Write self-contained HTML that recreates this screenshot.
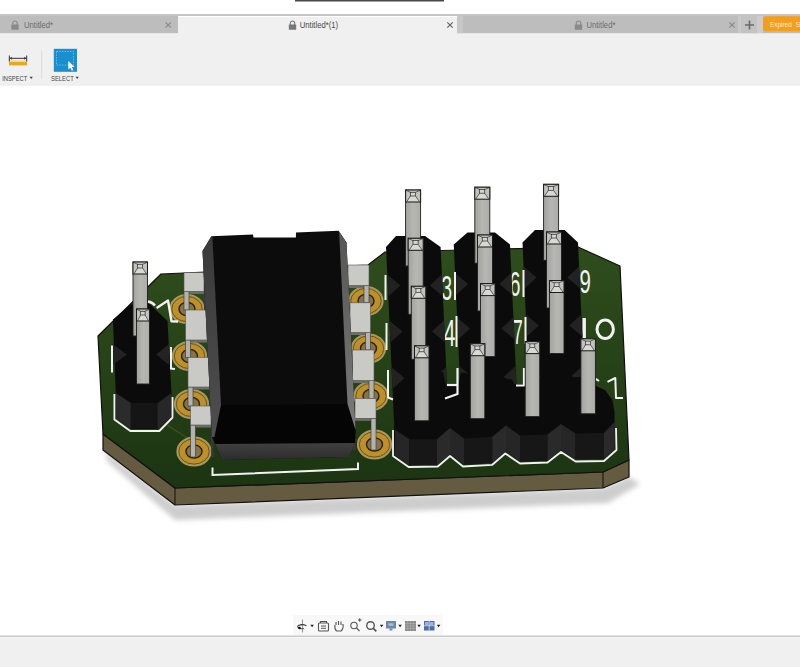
<!DOCTYPE html>
<html><head><meta charset="utf-8">
<style>
html,body{margin:0;padding:0;width:800px;height:667px;overflow:hidden;background:#fff;font-family:"Liberation Sans",sans-serif;}
svg{position:absolute;left:0;top:0;display:block}
</style></head>
<body>
<svg width="800" height="667" viewBox="0 0 800 667" font-family="Liberation Sans, sans-serif">
<defs>
  <linearGradient id="shadowG" x1="0" y1="0" x2="0" y2="1">
    <stop offset="0" stop-color="#c8c8c8"/>
    <stop offset="1" stop-color="#ffffff" stop-opacity="0"/>
  </linearGradient>
  <linearGradient id="pinG" x1="0" y1="0" x2="1" y2="0">
    <stop offset="0" stop-color="#a2a29e"/>
    <stop offset="0.5" stop-color="#b6b6b2"/>
    <stop offset="1" stop-color="#acaca8"/>
  </linearGradient>
  <linearGradient id="icSideL" x1="0" y1="0" x2="0" y2="1">
    <stop offset="0" stop-color="#3a3a3a"/>
    <stop offset="1" stop-color="#4e4e4e"/>
  </linearGradient>
  <linearGradient id="icSideR" x1="0" y1="0" x2="0" y2="1">
    <stop offset="0" stop-color="#555555"/>
    <stop offset="1" stop-color="#7a7a7a"/>
  </linearGradient>
  <linearGradient id="icFront" x1="0" y1="0" x2="0" y2="1">
    <stop offset="0" stop-color="#404040"/>
    <stop offset="1" stop-color="#2c2c2c"/>
  </linearGradient>
  <linearGradient id="hdrFront" x1="0" y1="0" x2="0" y2="1">
    <stop offset="0" stop-color="#3a3a3a"/>
    <stop offset="1" stop-color="#1e1e1e"/>
  </linearGradient>
  <linearGradient id="boardG" gradientUnits="userSpaceOnUse" x1="0" y1="250" x2="0" y2="488">
    <stop offset="0" stop-color="#2e4d1c"/>
    <stop offset="0.6" stop-color="#243f16"/>
    <stop offset="1" stop-color="#1c3412"/>
  </linearGradient>
  <filter id="blur6" x="-20%" y="-50%" width="140%" height="200%"><feGaussianBlur stdDeviation="2.5"/></filter>
</defs>


<rect x="0" y="0" width="800" height="14" fill="#ffffff"/>
<rect x="295" y="0" width="149" height="1.5" fill="#4a4a4a"/>
<rect x="0" y="14" width="800" height="19.5" fill="#bdbdbd"/>
<rect x="0" y="14" width="800" height="2" fill="#c6c6c6"/>
<rect x="178" y="16" width="279" height="18" fill="#f0f0f0"/>
<rect x="178" y="16" width="279" height="1" fill="#ffffff"/>
<rect x="457" y="16" width="6" height="17.5" fill="#c8c8c8"/>
<rect x="738" y="16" width="3" height="17.5" fill="#cacaca"/>
<rect x="741" y="16" width="16" height="17.5" fill="#c3c3c3"/>
<rect x="757" y="16" width="6" height="17.5" fill="#cdcdcd"/>
<rect x="763" y="16.2" width="45" height="15" rx="2.5" fill="#f49e1e"/>
<text x="770" y="27" font-size="7.4" fill="#fdeccc" textLength="21.7" lengthAdjust="spacingAndGlyphs">Expired</text>
<text x="795.5" y="27" font-size="7.4" fill="#fdeccc">S</text>
<rect x="0" y="33.5" width="800" height="51" fill="#f0f0f0"/>
<!-- tab icons/text -->
<g fill="none" stroke="#8a8a8a" stroke-width="1.1">
  <path d="M12.8,25 v-1.8 a2.2,2.2 0 0 1 4.4,0 v1.8"/>
  <path d="M290.3,25 v-1.8 a2.2,2.2 0 0 1 4.4,0 v1.8" stroke="#777"/>
  <path d="M576.3,25 v-1.8 a2.2,2.2 0 0 1 4.4,0 v1.8"/>
</g>
<rect x="11.3" y="24.6" width="7.4" height="5.2" rx="0.6" fill="#8a8a8a"/>
<rect x="288.8" y="24.6" width="7.4" height="5.2" rx="0.6" fill="#777"/>
<rect x="574.8" y="24.6" width="7.4" height="5.2" rx="0.6" fill="#8a8a8a"/>
<text x="24" y="28.4" font-size="8.5" fill="#6c6c6c" textLength="29" lengthAdjust="spacingAndGlyphs">Untitled*</text>
<text x="299.7" y="28.4" font-size="8.5" fill="#4a4a4a" textLength="38.5" lengthAdjust="spacingAndGlyphs">Untitled*(1)</text>
<text x="586.4" y="28.4" font-size="8.5" fill="#6c6c6c" textLength="29" lengthAdjust="spacingAndGlyphs">Untitled*</text>
<g stroke="#8a8a8a" stroke-width="1.2">
  <path d="M165.5,22.3 l5.4,5.4 M170.9,22.3 l-5.4,5.4"/>
  <path d="M447.3,22.3 l5.4,5.4 M452.7,22.3 l-5.4,5.4" stroke="#666"/>
  <path d="M729.3,22.3 l5.4,5.4 M734.7,22.3 l-5.4,5.4"/>
</g>
<path d="M745,25 h9 M749.5,20.5 v9" stroke="#6a6a6a" stroke-width="1.6"/>

<rect x="0" y="84.5" width="800" height="1" fill="#e6e6e6"/>
<!-- inspect icon -->
<rect x="9" y="60.8" width="18" height="4.6" fill="#e8a81c"/>
<rect x="9" y="60.8" width="18" height="1.2" fill="#f8d880"/>
<path d="M9.3,55.5 v6 M26.7,55.5 v6 M9.5,58.3 h17" stroke="#333" stroke-width="1"/>
<path d="M9.8,58.3 l2,-1.5 v3 z M26.2,58.3 l-2,-1.5 v3 z" fill="#333"/>
<text x="2.2" y="80.6" font-size="7.2" fill="#444" textLength="25" lengthAdjust="spacingAndGlyphs">INSPECT</text>
<path d="M29.5,76.8 h3.4 l-1.7,2.2 z" fill="#444"/>
<rect x="41.2" y="50" width="1" height="29" fill="#dcdcdc"/>
<!-- select icon -->
<rect x="53.8" y="48.8" width="23.2" height="23" fill="#1a8fd0"/>
<rect x="56.5" y="51.5" width="17" height="13.5" fill="none" stroke="#7cc4ee" stroke-width="0.8" stroke-dasharray="1.5,1.2"/>
<path d="M68.3,61 l0,8.5 l2,-1.8 l1.5,3 l1.5,-0.7 l-1.5,-2.9 l2.7,-0.2 z" fill="#fff"/>
<text x="51" y="80.6" font-size="7.2" fill="#444" textLength="22.7" lengthAdjust="spacingAndGlyphs">SELECT</text>
<path d="M75.5,76.8 h3.4 l-1.7,2.2 z" fill="#444"/>
<!-- bottom nav -->
<rect x="293" y="615" width="150" height="20" fill="#f8f8f8"/>
<g fill="none" stroke="#555" stroke-width="1.1">
  <path d="M302.5,619.5 v13" stroke="#9a9a9a"/>
  <path d="M298,627.5 a4.5,2 0 0 1 8.5,-1.5" stroke="#333"/>
  <path d="M298,627.5 a4.5,2 0 0 0 6,1"/>
  <rect x="318.5" y="623" width="10" height="8" rx="1"/>
  <path d="M321,626 h5 M321,628.3 h5 M320.5,623 v-1.5 h6 v1.5"/>
  <path d="M336.5,631 c-2,-2 -2,-4 -1.5,-6 M336,625 v-3 M338.5,625 v-4 M341,625 v-3.5 M343,626 v-2 c0.5,3 0.5,5 -2,7 h-4.5"/>
  <circle cx="354" cy="625.5" r="3.2"/>
  <path d="M356.5,628 l3,3 M358,620 h3.5 M359.7,618.2 v3.5"/>
  <circle cx="370.5" cy="625.5" r="3.8" stroke-width="1.4"/>
  <path d="M373.3,628.3 l3,3" stroke-width="1.8"/>
</g>
<path d="M310.3,624.8 h3.6 l-1.8,2.4 z M379.8,624.8 h3.6 l-1.8,2.4 z M398.3,624.8 h3.6 l-1.8,2.4 z M417.3,624.8 h3.6 l-1.8,2.4 z M436.8,624.8 h3.6 l-1.8,2.4 z" fill="#222"/>
<circle cx="299.5" cy="628" r="1.3" fill="#111"/>
<rect x="386" y="621" width="10" height="7.5" fill="#7088a8"/>
<rect x="388.5" y="623.3" width="5" height="2.5" fill="#a9c0e0"/>
<rect x="389.5" y="628.5" width="3" height="2" fill="#7088a8"/>
<rect x="405" y="621" width="11" height="10" fill="#8a8a8a"/>
<path d="M407.7,621 v10 M410.5,621 v10 M413.2,621 v10 M405,623.5 h11 M405,626 h11 M405,628.5 h11" stroke="#b0b0b0" stroke-width="0.6"/>
<rect x="424" y="621" width="10.5" height="9.5" fill="#4c6ca8"/>
<path d="M429.2,621 v9.5 M424,625.7 h10.5" stroke="#d8e4f4" stroke-width="0.8"/>
<rect x="425" y="622" width="3.5" height="3" fill="#9cb4dc"/>
<rect x="430" y="622" width="3.5" height="3" fill="#9cb4dc"/>

<rect x="0" y="636" width="800" height="31" fill="#f0f0f0"/>
<rect x="0" y="635.5" width="800" height="1.5" fill="#c9c9c9"/>
<rect x="0" y="637" width="800" height="1" fill="#f7f7f7"/>


<polygon points="104,450 175,505 603,488 629,477 640,484 608,503 175,520 108,462" fill="#cdcdcd" filter="url(#blur6)"/>
<polygon points="103,434 175,488 603,472 629,460 629,477 603,488 175,505 103,450" fill="#645b40" stroke="#111" stroke-width="1.2" stroke-linejoin="round"/>
<line x1="175" y1="488" x2="175" y2="505" stroke="#111" stroke-width="1"/>
<line x1="603" y1="472" x2="603" y2="488" stroke="#111" stroke-width="1"/>
<polygon points="98,336 161,274 368,265 385,252 578,247 620,266 629,460 603,472 175,488 103,434" fill="url(#boardG)" stroke="#111" stroke-width="1.2" stroke-linejoin="round"/>

<path d="M166.5,424.7 L189,439" stroke="#4a5a22" stroke-width="1.2" fill="none" opacity="0.8"/>
<ellipse cx="187" cy="309" rx="16.8" ry="14.2" fill="#bd9029" stroke="#a39a6a" stroke-width="1.6"/>
<ellipse cx="187" cy="309" rx="15.2" ry="12.6" fill="none" stroke="#4a3a14" stroke-width="0.7"/>
<ellipse cx="187" cy="309" rx="8" ry="6.6" fill="#857449" stroke="#2a2008" stroke-width="1.4"/>
<ellipse cx="189.5" cy="356" rx="16.8" ry="14.2" fill="#bd9029" stroke="#a39a6a" stroke-width="1.6"/>
<ellipse cx="189.5" cy="356" rx="15.2" ry="12.6" fill="none" stroke="#4a3a14" stroke-width="0.7"/>
<ellipse cx="189.5" cy="356" rx="8" ry="6.6" fill="#857449" stroke="#2a2008" stroke-width="1.4"/>
<ellipse cx="191.5" cy="404" rx="16.8" ry="14.2" fill="#bd9029" stroke="#a39a6a" stroke-width="1.6"/>
<ellipse cx="191.5" cy="404" rx="15.2" ry="12.6" fill="none" stroke="#4a3a14" stroke-width="0.7"/>
<ellipse cx="191.5" cy="404" rx="8" ry="6.6" fill="#857449" stroke="#2a2008" stroke-width="1.4"/>
<ellipse cx="194" cy="451.5" rx="16.8" ry="14.2" fill="#bd9029" stroke="#a39a6a" stroke-width="1.6"/>
<ellipse cx="194" cy="451.5" rx="15.2" ry="12.6" fill="none" stroke="#4a3a14" stroke-width="0.7"/>
<ellipse cx="194" cy="451.5" rx="8" ry="6.6" fill="#857449" stroke="#2a2008" stroke-width="1.4"/>
<ellipse cx="366" cy="301" rx="16.8" ry="14.2" fill="#bd9029" stroke="#a39a6a" stroke-width="1.6"/>
<ellipse cx="366" cy="301" rx="15.2" ry="12.6" fill="none" stroke="#4a3a14" stroke-width="0.7"/>
<ellipse cx="366" cy="301" rx="8" ry="6.6" fill="#857449" stroke="#2a2008" stroke-width="1.4"/>
<ellipse cx="368.5" cy="348.5" rx="16.8" ry="14.2" fill="#bd9029" stroke="#a39a6a" stroke-width="1.6"/>
<ellipse cx="368.5" cy="348.5" rx="15.2" ry="12.6" fill="none" stroke="#4a3a14" stroke-width="0.7"/>
<ellipse cx="368.5" cy="348.5" rx="8" ry="6.6" fill="#857449" stroke="#2a2008" stroke-width="1.4"/>
<ellipse cx="371" cy="396" rx="16.8" ry="14.2" fill="#bd9029" stroke="#a39a6a" stroke-width="1.6"/>
<ellipse cx="371" cy="396" rx="15.2" ry="12.6" fill="none" stroke="#4a3a14" stroke-width="0.7"/>
<ellipse cx="371" cy="396" rx="8" ry="6.6" fill="#857449" stroke="#2a2008" stroke-width="1.4"/>
<ellipse cx="374.5" cy="444.5" rx="16.8" ry="14.2" fill="#bd9029" stroke="#a39a6a" stroke-width="1.6"/>
<ellipse cx="374.5" cy="444.5" rx="15.2" ry="12.6" fill="none" stroke="#4a3a14" stroke-width="0.7"/>
<ellipse cx="374.5" cy="444.5" rx="8" ry="6.6" fill="#857449" stroke="#2a2008" stroke-width="1.4"/>
<rect x="184" y="291.4" width="22" height="2.5" fill="#6e6e6a"/>
<rect x="184" y="291.4" width="5" height="18.600000000000023" fill="#b2b2ae" stroke="#333" stroke-width="0.6"/>
<rect x="204" y="291.4" width="2.5" height="18.600000000000023" fill="#3a3a3a"/>
<rect x="185.6" y="340" width="23.400000000000006" height="2.5" fill="#6e6e6a"/>
<rect x="185.6" y="340" width="5" height="17.5" fill="#b2b2ae" stroke="#333" stroke-width="0.6"/>
<rect x="207" y="340" width="2.5" height="17.5" fill="#3a3a3a"/>
<rect x="188" y="387" width="23.5" height="2.5" fill="#6e6e6a"/>
<rect x="188" y="387" width="5" height="19" fill="#b2b2ae" stroke="#333" stroke-width="0.6"/>
<rect x="209.5" y="387" width="2.5" height="19" fill="#3a3a3a"/>
<rect x="190.5" y="425" width="22.5" height="2.5" fill="#6e6e6a"/>
<rect x="190.5" y="425" width="5" height="32" fill="#b2b2ae" stroke="#333" stroke-width="0.6"/>
<rect x="211" y="425" width="2.5" height="32" fill="#3a3a3a"/>
<rect x="184" y="272.6" width="20" height="18.799999999999955" fill="#c9c9c5" stroke="#555" stroke-width="0.6"/>
<rect x="185.6" y="310" width="21.400000000000006" height="30" fill="#c9c9c5" stroke="#555" stroke-width="0.6"/>
<rect x="188" y="357.5" width="21.5" height="29.5" fill="#c9c9c5" stroke="#555" stroke-width="0.6"/>
<rect x="190.5" y="406" width="20.5" height="19" fill="#c9c9c5" stroke="#555" stroke-width="0.6"/>
<rect x="346" y="285.5" width="2.5" height="17.30000000000001" fill="#3a3a3a"/>
<rect x="348" y="285.5" width="21" height="2.5" fill="#6e6e6a"/>
<rect x="364" y="285.5" width="5" height="17.30000000000001" fill="#b2b2ae" stroke="#333" stroke-width="0.6"/>
<rect x="348" y="332.5" width="2.5" height="17.5" fill="#3a3a3a"/>
<rect x="350" y="332.5" width="20.5" height="2.5" fill="#6e6e6a"/>
<rect x="365.5" y="332.5" width="5" height="17.5" fill="#b2b2ae" stroke="#333" stroke-width="0.6"/>
<rect x="350.5" y="380.6" width="2.5" height="17.899999999999977" fill="#3a3a3a"/>
<rect x="352.5" y="380.6" width="21.5" height="2.5" fill="#6e6e6a"/>
<rect x="369" y="380.6" width="5" height="17.899999999999977" fill="#b2b2ae" stroke="#333" stroke-width="0.6"/>
<rect x="353" y="418.3" width="2.5" height="31.69999999999999" fill="#3a3a3a"/>
<rect x="355" y="418.3" width="21" height="2.5" fill="#6e6e6a"/>
<rect x="371" y="418.3" width="5" height="31.69999999999999" fill="#b2b2ae" stroke="#333" stroke-width="0.6"/>
<rect x="348" y="265" width="21" height="20.5" fill="#c9c9c5" stroke="#555" stroke-width="0.6"/>
<rect x="350" y="302.8" width="20.5" height="29.69999999999999" fill="#c9c9c5" stroke="#555" stroke-width="0.6"/>
<rect x="352.5" y="350" width="21.5" height="30.600000000000023" fill="#c9c9c5" stroke="#555" stroke-width="0.6"/>
<rect x="355" y="398.5" width="21" height="19.80000000000001" fill="#c9c9c5" stroke="#555" stroke-width="0.6"/>

<polygon points="202.5,251 211.4,236.2 253,234.6 253.5,237.6 295.9,237.6 296,232.4 338.6,230.8 346.5,242.5 355.5,430 355,443 349,457 222,460 215,444 212,437" fill="#0c0c0c"/>
<polygon points="214.4,437 221,405 347.5,404 355.5,430 355,443 215,444" fill="#050505"/>
<polygon points="202.5,251 211.4,236.2 212.4,237.6 221,405 214.4,437 212,437" fill="url(#icSideL)"/>
<polygon points="338.6,230.8 346.5,242.5 355.5,430 347.5,404 339.2,233" fill="url(#icSideR)"/>
<polygon points="215,444 355,443 349,457 222,460" fill="url(#icFront)"/>
<polyline points="212.5,467.5 212.5,475 358,469 358,462.4" fill="none" stroke="#f2f2f2" stroke-width="2"/>

<polygon points="131,304.6 149,303.5 167.5,321 171.5,393 171.5,417 157.5,428.7 130.8,428.7 115.8,417.5 115.8,393 112.9,319.5" fill="#0b0b0b"/>
<polygon points="115.8,393 130.8,403 130.8,428.7 115.8,417.5" fill="#2b2b2b"/>
<polygon points="130.8,403 157.5,403 157.5,428.7 130.8,428.7" fill="#151515"/>
<polygon points="157.5,403 171.5,393 171.5,417 157.5,428.7" fill="#272727"/>
<polygon points="112.5,344 127,354.4 112.5,365" fill="#232323"/>
<polygon points="169,344 156.2,354.4 169,365" fill="#232323"/>
<polyline points="112,345.4 112,372.4" stroke="#f2f2f2" stroke-width="2" fill="none"/>
<polyline points="171,347 171,368.5 175,369" stroke="#f2f2f2" stroke-width="2" fill="none"/>
<polyline points="114.4,394 114.4,419.4 130.3,431 159.4,431 172.5,417.5 172.5,397" stroke="#f2f2f2" stroke-width="1.8" fill="none" stroke-linejoin="round"/>
<path d="M148,301.5 q4.5,0.8 7,4" stroke="#f2f2f2" stroke-width="2.4" fill="none"/>
<polyline points="156.6,308 168,300.5 171.5,321.2 178,321.5" stroke="#f2f2f2" stroke-width="2.4" fill="none" stroke-linejoin="round"/>
<g transform="translate(133,262)">
<rect x="0" y="0" width="14.5" height="74" fill="url(#pinG)" stroke="#1e1e1e" stroke-width="0.9"/>
<rect x="0" y="0" width="14.5" height="12" fill="#c2c2be"/>
<polygon points="4.64,6.0 9.57,6.0 13.3,11.5 1.2,11.5" fill="#d8d8d4"/>
<path d="M0.3,0.3 L4.64,2.3 M14.2,0.3 L9.57,2.3 M1.2,11.5 L4.64,6.0 M13.3,11.5 L9.57,6.0" stroke="#333" stroke-width="0.7"/>
<rect x="4.64" y="2.3" width="4.930000000000001" height="3.7" fill="#d4d4d0" stroke="#2a2a2a" stroke-width="0.7"/>
<rect x="0" y="0" width="14.5" height="12" fill="none" stroke="#1a1a1a" stroke-width="1"/>
</g>
<g transform="translate(136.5,309)">
<rect x="0" y="0" width="13" height="75" fill="url(#pinG)" stroke="#1e1e1e" stroke-width="0.9"/>
<rect x="0" y="0" width="13" height="12" fill="#c2c2be"/>
<polygon points="4.16,6.0 8.58,6.0 11.8,11.5 1.2,11.5" fill="#d8d8d4"/>
<path d="M0.3,0.3 L4.16,2.3 M12.7,0.3 L8.58,2.3 M1.2,11.5 L4.16,6.0 M11.8,11.5 L8.58,6.0" stroke="#333" stroke-width="0.7"/>
<rect x="4.16" y="2.3" width="4.42" height="3.7" fill="#d4d4d0" stroke="#2a2a2a" stroke-width="0.7"/>
<rect x="0" y="0" width="13" height="12" fill="none" stroke="#1a1a1a" stroke-width="1"/>
</g>
<text x="441.4" y="299.5" font-size="34.5" fill="#f2f2f2" textLength="10.6" lengthAdjust="spacingAndGlyphs">3</text>
<text x="443.5" y="346" font-size="36.3" fill="#f2f2f2" textLength="12.0" lengthAdjust="spacingAndGlyphs">4</text>
<text x="509.5" y="296" font-size="34.9" fill="#f2f2f2" textLength="11.0" lengthAdjust="spacingAndGlyphs">6</text>
<text x="513" y="344" font-size="34.9" fill="#f2f2f2" textLength="9.7" lengthAdjust="spacingAndGlyphs">7</text>
<text x="579.6" y="293" font-size="33.5" fill="#f2f2f2" textLength="11.4" lengthAdjust="spacingAndGlyphs">9</text>
<rect x="582.5" y="318" width="3.4" height="20" fill="#f2f2f2"/>
<ellipse cx="605.2" cy="329.3" rx="8.2" ry="9.2" fill="none" stroke="#f2f2f2" stroke-width="3"/>
<polyline points="595.6,378.8 599,381" stroke="#f2f2f2" stroke-width="2" fill="none"/>
<polyline points="607.5,381.8 615.3,378 616,398 623,398" stroke="#f2f2f2" stroke-width="2" fill="none" stroke-linejoin="round"/>
<polygon points="386,247 396,236 425,236 440.6,247 448.6,420 394.0,420" fill="#0b0b0b"/>
<polygon points="387.2,274.5 400.3,285.5 388.4,296.5" fill="#222"/>
<polygon points="441.8,274.5 429.9,285.5 443.0,296.5" fill="#222"/>
<polygon points="389.3,320.5 402.4,331.5 390.5,342.5" fill="#222"/>
<polygon points="443.9,320.5 432.0,331.5 445.1,342.5" fill="#222"/>
<polygon points="391.4,367 404.5,378 392.6,389" fill="#222"/>
<polygon points="446.0,367 434.1,378 447.2,389" fill="#222"/>
<polygon points="453.75,244.5 467.5,232.5 495,232.5 510,244.5 518.1,420 461.8,420" fill="#0b0b0b"/>
<polygon points="455.0,273 468.1,284 456.2,295" fill="#222"/>
<polygon points="511.2,273 499.3,284 512.4,295" fill="#222"/>
<polygon points="457.0,317.5 470.1,328.5 458.2,339.5" fill="#222"/>
<polygon points="513.3,317.5 501.4,328.5 514.5,339.5" fill="#222"/>
<polygon points="459.2,366 472.3,377 460.4,388" fill="#222"/>
<polygon points="515.5,366 503.6,377 516.7,388" fill="#222"/>
<polygon points="522.5,242.5 535,229.9 564.6,229.9 578,242.5 586.2,420 530.7,420" fill="#0b0b0b"/>
<polygon points="523.5,266.5 536.6,277.5 524.7,288.5" fill="#222"/>
<polygon points="579.0,266.5 567.1,277.5 580.2,288.5" fill="#222"/>
<polygon points="525.7,314.5 538.8,325.5 526.9,336.5" fill="#222"/>
<polygon points="581.2,314.5 569.3,325.5 582.4,336.5" fill="#222"/>
<polygon points="528.0,365 541.1,376 529.2,387" fill="#222"/>
<polygon points="583.5,365 571.6,376 584.7,387" fill="#222"/>
<rect x="384.5" y="275" width="2" height="25" fill="#f2f2f2"/>
<rect x="385.5" y="323" width="2" height="27" fill="#f2f2f2"/>
<rect x="387" y="370" width="2" height="28" fill="#f2f2f2"/>
<rect x="454" y="272" width="2" height="28" fill="#f2f2f2"/>
<rect x="455.5" y="316" width="2" height="31" fill="#f2f2f2"/>
<rect x="522.5" y="270" width="2" height="27" fill="#f2f2f2"/>
<rect x="524.5" y="317" width="2" height="27" fill="#f2f2f2"/>
<polyline points="388,397.5 393,399.5" stroke="#f2f2f2" stroke-width="2" fill="none"/>
<polygon points="394.8,398 402,384 417,372 443,372 446,386 458,386 461,372.5 512,379.5 514.5,384 527,384 529,379.5 580,377 593,384.8 605,390 612.4,400 614.5,412 614.5,448 604,459 575.6,459 561,450 547.5,460.5 520,461.5 506,451.5 492.3,462.8 464,464.5 450,454 437,465.3 409.4,465.3 394.8,455.5 393.7,440" fill="#0b0b0b"/>
<polygon points="394.8,429.5 409.4,439.3 409.4,465.3 394.8,455.5" fill="#262626"/>
<polygon points="409.4,439.3 437,439.3 437,465.3 409.4,465.3" fill="#171717"/>
<polygon points="437,439.3 450,427.9 450,453.9 437,465.3" fill="#2a2a2a"/>
<polygon points="450,428 464,438.5 464,464.5 450,454" fill="#262626"/>
<polygon points="464,438.5 492.3,436.8 492.3,462.8 464,464.5" fill="#171717"/>
<polygon points="492.3,436.8 506,425.5 506,451.5 492.3,462.8" fill="#2a2a2a"/>
<polygon points="506,425.5 520,435.5 520,461.5 506,451.5" fill="#262626"/>
<polygon points="520,435.5 547.5,434.5 547.5,460.5 520,461.5" fill="#171717"/>
<polygon points="547.5,434.5 561,424 561,450 547.5,460.5" fill="#2a2a2a"/>
<polygon points="561,424 575.6,433.5 575.6,459.5 561,450" fill="#262626"/>
<polygon points="575.6,433.5 604,433 604,459 575.6,459.5" fill="#171717"/>
<polygon points="604,433 614.5,422 614.5,448 604,459" fill="#2a2a2a"/>
<polyline points="393,430 393,456 408.6,467 437.8,466.5 450,456 463,466.5 492.3,464.8 505.3,453.5 520,463.5 547.5,462.5 561,452 575.6,461.5 604,461 616.5,450 616,428" fill="none" stroke="#f2f2f2" stroke-width="1.8" stroke-linejoin="round"/>
<polyline points="457.5,368 457.5,394 445,398.5" stroke="#f2f2f2" stroke-width="2.2" fill="none" stroke-linejoin="round"/>
<polyline points="447,385 457.5,385" stroke="#f2f2f2" stroke-width="2.2" fill="none"/>
<polyline points="524,368 524,385.5 516,385.5" stroke="#f2f2f2" stroke-width="2.2" fill="none" stroke-linejoin="round"/>
<g transform="translate(405.6,190)">
<rect x="0" y="0" width="15" height="76" fill="url(#pinG)" stroke="#1e1e1e" stroke-width="0.9"/>
<rect x="0" y="0" width="15" height="12" fill="#c2c2be"/>
<polygon points="4.8,6.0 9.9,6.0 13.8,11.5 1.2,11.5" fill="#d8d8d4"/>
<path d="M0.3,0.3 L4.8,2.3 M14.7,0.3 L9.9,2.3 M1.2,11.5 L4.8,6.0 M13.8,11.5 L9.9,6.0" stroke="#333" stroke-width="0.7"/>
<rect x="4.8" y="2.3" width="5.1000000000000005" height="3.7" fill="#d4d4d0" stroke="#2a2a2a" stroke-width="0.7"/>
<rect x="0" y="0" width="15" height="12" fill="none" stroke="#1a1a1a" stroke-width="1"/>
</g>
<g transform="translate(474.8,187.2)">
<rect x="0" y="0" width="15" height="76" fill="url(#pinG)" stroke="#1e1e1e" stroke-width="0.9"/>
<rect x="0" y="0" width="15" height="12" fill="#c2c2be"/>
<polygon points="4.8,6.0 9.9,6.0 13.8,11.5 1.2,11.5" fill="#d8d8d4"/>
<path d="M0.3,0.3 L4.8,2.3 M14.7,0.3 L9.9,2.3 M1.2,11.5 L4.8,6.0 M13.8,11.5 L9.9,6.0" stroke="#333" stroke-width="0.7"/>
<rect x="4.8" y="2.3" width="5.1000000000000005" height="3.7" fill="#d4d4d0" stroke="#2a2a2a" stroke-width="0.7"/>
<rect x="0" y="0" width="15" height="12" fill="none" stroke="#1a1a1a" stroke-width="1"/>
</g>
<g transform="translate(543.6,184.3)">
<rect x="0" y="0" width="15" height="76" fill="url(#pinG)" stroke="#1e1e1e" stroke-width="0.9"/>
<rect x="0" y="0" width="15" height="12" fill="#c2c2be"/>
<polygon points="4.8,6.0 9.9,6.0 13.8,11.5 1.2,11.5" fill="#d8d8d4"/>
<path d="M0.3,0.3 L4.8,2.3 M14.7,0.3 L9.9,2.3 M1.2,11.5 L4.8,6.0 M13.8,11.5 L9.9,6.0" stroke="#333" stroke-width="0.7"/>
<rect x="4.8" y="2.3" width="5.1000000000000005" height="3.7" fill="#d4d4d0" stroke="#2a2a2a" stroke-width="0.7"/>
<rect x="0" y="0" width="15" height="12" fill="none" stroke="#1a1a1a" stroke-width="1"/>
</g>
<g transform="translate(408.2,238.3)">
<rect x="0" y="0" width="15" height="76" fill="url(#pinG)" stroke="#1e1e1e" stroke-width="0.9"/>
<rect x="0" y="0" width="15" height="12" fill="#c2c2be"/>
<polygon points="4.8,6.0 9.9,6.0 13.8,11.5 1.2,11.5" fill="#d8d8d4"/>
<path d="M0.3,0.3 L4.8,2.3 M14.7,0.3 L9.9,2.3 M1.2,11.5 L4.8,6.0 M13.8,11.5 L9.9,6.0" stroke="#333" stroke-width="0.7"/>
<rect x="4.8" y="2.3" width="5.1000000000000005" height="3.7" fill="#d4d4d0" stroke="#2a2a2a" stroke-width="0.7"/>
<rect x="0" y="0" width="15" height="12" fill="none" stroke="#1a1a1a" stroke-width="1"/>
</g>
<g transform="translate(477.5,235)">
<rect x="0" y="0" width="15" height="76" fill="url(#pinG)" stroke="#1e1e1e" stroke-width="0.9"/>
<rect x="0" y="0" width="15" height="12" fill="#c2c2be"/>
<polygon points="4.8,6.0 9.9,6.0 13.8,11.5 1.2,11.5" fill="#d8d8d4"/>
<path d="M0.3,0.3 L4.8,2.3 M14.7,0.3 L9.9,2.3 M1.2,11.5 L4.8,6.0 M13.8,11.5 L9.9,6.0" stroke="#333" stroke-width="0.7"/>
<rect x="4.8" y="2.3" width="5.1000000000000005" height="3.7" fill="#d4d4d0" stroke="#2a2a2a" stroke-width="0.7"/>
<rect x="0" y="0" width="15" height="12" fill="none" stroke="#1a1a1a" stroke-width="1"/>
</g>
<g transform="translate(546.5,232)">
<rect x="0" y="0" width="15" height="76" fill="url(#pinG)" stroke="#1e1e1e" stroke-width="0.9"/>
<rect x="0" y="0" width="15" height="12" fill="#c2c2be"/>
<polygon points="4.8,6.0 9.9,6.0 13.8,11.5 1.2,11.5" fill="#d8d8d4"/>
<path d="M0.3,0.3 L4.8,2.3 M14.7,0.3 L9.9,2.3 M1.2,11.5 L4.8,6.0 M13.8,11.5 L9.9,6.0" stroke="#333" stroke-width="0.7"/>
<rect x="4.8" y="2.3" width="5.1000000000000005" height="3.7" fill="#d4d4d0" stroke="#2a2a2a" stroke-width="0.7"/>
<rect x="0" y="0" width="15" height="12" fill="none" stroke="#1a1a1a" stroke-width="1"/>
</g>
<g transform="translate(411.3,286.3)">
<rect x="0" y="0" width="14.5" height="73" fill="url(#pinG)" stroke="#1e1e1e" stroke-width="0.9"/>
<rect x="0" y="0" width="14.5" height="12" fill="#c2c2be"/>
<polygon points="4.64,6.0 9.57,6.0 13.3,11.5 1.2,11.5" fill="#d8d8d4"/>
<path d="M0.3,0.3 L4.64,2.3 M14.2,0.3 L9.57,2.3 M1.2,11.5 L4.64,6.0 M13.3,11.5 L9.57,6.0" stroke="#333" stroke-width="0.7"/>
<rect x="4.64" y="2.3" width="4.930000000000001" height="3.7" fill="#d4d4d0" stroke="#2a2a2a" stroke-width="0.7"/>
<rect x="0" y="0" width="14.5" height="12" fill="none" stroke="#1a1a1a" stroke-width="1"/>
</g>
<g transform="translate(480.5,283.6)">
<rect x="0" y="0" width="14.5" height="73" fill="url(#pinG)" stroke="#1e1e1e" stroke-width="0.9"/>
<rect x="0" y="0" width="14.5" height="12" fill="#c2c2be"/>
<polygon points="4.64,6.0 9.57,6.0 13.3,11.5 1.2,11.5" fill="#d8d8d4"/>
<path d="M0.3,0.3 L4.64,2.3 M14.2,0.3 L9.57,2.3 M1.2,11.5 L4.64,6.0 M13.3,11.5 L9.57,6.0" stroke="#333" stroke-width="0.7"/>
<rect x="4.64" y="2.3" width="4.930000000000001" height="3.7" fill="#d4d4d0" stroke="#2a2a2a" stroke-width="0.7"/>
<rect x="0" y="0" width="14.5" height="12" fill="none" stroke="#1a1a1a" stroke-width="1"/>
</g>
<g transform="translate(549.5,280.5)">
<rect x="0" y="0" width="14.5" height="73" fill="url(#pinG)" stroke="#1e1e1e" stroke-width="0.9"/>
<rect x="0" y="0" width="14.5" height="12" fill="#c2c2be"/>
<polygon points="4.64,6.0 9.57,6.0 13.3,11.5 1.2,11.5" fill="#d8d8d4"/>
<path d="M0.3,0.3 L4.64,2.3 M14.2,0.3 L9.57,2.3 M1.2,11.5 L4.64,6.0 M13.3,11.5 L9.57,6.0" stroke="#333" stroke-width="0.7"/>
<rect x="4.64" y="2.3" width="4.930000000000001" height="3.7" fill="#d4d4d0" stroke="#2a2a2a" stroke-width="0.7"/>
<rect x="0" y="0" width="14.5" height="12" fill="none" stroke="#1a1a1a" stroke-width="1"/>
</g>
<g transform="translate(414.5,345.8)">
<rect x="0" y="0" width="14.5" height="75" fill="url(#pinG)" stroke="#1e1e1e" stroke-width="0.9"/>
<rect x="0" y="0" width="14.5" height="12" fill="#c2c2be"/>
<polygon points="4.64,6.0 9.57,6.0 13.3,11.5 1.2,11.5" fill="#d8d8d4"/>
<path d="M0.3,0.3 L4.64,2.3 M14.2,0.3 L9.57,2.3 M1.2,11.5 L4.64,6.0 M13.3,11.5 L9.57,6.0" stroke="#333" stroke-width="0.7"/>
<rect x="4.64" y="2.3" width="4.930000000000001" height="3.7" fill="#d4d4d0" stroke="#2a2a2a" stroke-width="0.7"/>
<rect x="0" y="0" width="14.5" height="12" fill="none" stroke="#1a1a1a" stroke-width="1"/>
</g>
<g transform="translate(470.3,343.7)">
<rect x="0" y="0" width="14.5" height="75" fill="url(#pinG)" stroke="#1e1e1e" stroke-width="0.9"/>
<rect x="0" y="0" width="14.5" height="12" fill="#c2c2be"/>
<polygon points="4.64,6.0 9.57,6.0 13.3,11.5 1.2,11.5" fill="#d8d8d4"/>
<path d="M0.3,0.3 L4.64,2.3 M14.2,0.3 L9.57,2.3 M1.2,11.5 L4.64,6.0 M13.3,11.5 L9.57,6.0" stroke="#333" stroke-width="0.7"/>
<rect x="4.64" y="2.3" width="4.930000000000001" height="3.7" fill="#d4d4d0" stroke="#2a2a2a" stroke-width="0.7"/>
<rect x="0" y="0" width="14.5" height="12" fill="none" stroke="#1a1a1a" stroke-width="1"/>
</g>
<g transform="translate(525.2,341.6)">
<rect x="0" y="0" width="14.5" height="75" fill="url(#pinG)" stroke="#1e1e1e" stroke-width="0.9"/>
<rect x="0" y="0" width="14.5" height="12" fill="#c2c2be"/>
<polygon points="4.64,6.0 9.57,6.0 13.3,11.5 1.2,11.5" fill="#d8d8d4"/>
<path d="M0.3,0.3 L4.64,2.3 M14.2,0.3 L9.57,2.3 M1.2,11.5 L4.64,6.0 M13.3,11.5 L9.57,6.0" stroke="#333" stroke-width="0.7"/>
<rect x="4.64" y="2.3" width="4.930000000000001" height="3.7" fill="#d4d4d0" stroke="#2a2a2a" stroke-width="0.7"/>
<rect x="0" y="0" width="14.5" height="12" fill="none" stroke="#1a1a1a" stroke-width="1"/>
</g>
<g transform="translate(580.9,338.8)">
<rect x="0" y="0" width="14.5" height="75" fill="url(#pinG)" stroke="#1e1e1e" stroke-width="0.9"/>
<rect x="0" y="0" width="14.5" height="12" fill="#c2c2be"/>
<polygon points="4.64,6.0 9.57,6.0 13.3,11.5 1.2,11.5" fill="#d8d8d4"/>
<path d="M0.3,0.3 L4.64,2.3 M14.2,0.3 L9.57,2.3 M1.2,11.5 L4.64,6.0 M13.3,11.5 L9.57,6.0" stroke="#333" stroke-width="0.7"/>
<rect x="4.64" y="2.3" width="4.930000000000001" height="3.7" fill="#d4d4d0" stroke="#2a2a2a" stroke-width="0.7"/>
<rect x="0" y="0" width="14.5" height="12" fill="none" stroke="#1a1a1a" stroke-width="1"/>
</g>
</svg>
</body></html>
